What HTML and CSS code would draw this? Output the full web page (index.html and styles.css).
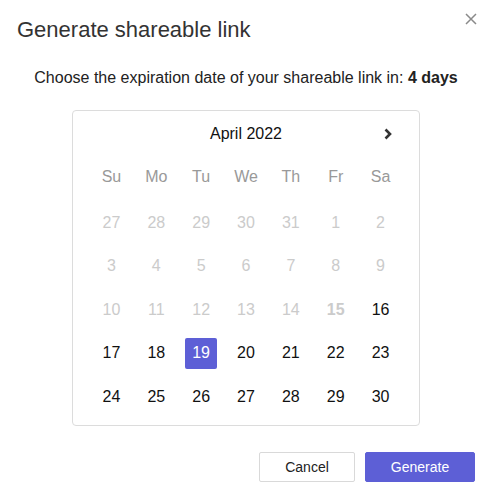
FILE: index.html
```html
<!DOCTYPE html>
<html>
<head>
<meta charset="utf-8">
<link rel="stylesheet" href="styles.css">
</head>
<body>
<div class="dialog">
  <div class="head">
    <h1 class="title">Generate shareable link</h1>
    <button class="close" aria-label="Close">
      <svg width="12" height="12" viewBox="0 0 12 12"><path d="M1 1L11 11M11 1L1 11" stroke="#8a8a8a" stroke-width="1.5" fill="none"/></svg>
    </button>
  </div>
  <p class="lead">Choose the expiration date of your shareable link in: <b>4 days</b></p>
  <div class="cal">
    <div class="cal-head">
      <span class="month">April 2022</span>
      <span class="next">
        <svg width="10" height="12" viewBox="0 0 10 12"><path d="M2.5 1.5L7 6L2.5 10.5" stroke="#333" stroke-width="2.6" fill="none"/></svg>
      </span>
    </div>
    <div class="weekdays">
      <span class="wd">Su</span><span class="wd">Mo</span><span class="wd">Tu</span><span class="wd">We</span><span class="wd">Th</span><span class="wd">Fr</span><span class="wd">Sa</span>
    </div>
    <div class="days">
      <span class="d off">27</span><span class="d off">28</span><span class="d off">29</span><span class="d off">30</span><span class="d off">31</span><span class="d off">1</span><span class="d off">2</span>
      <span class="d off">3</span><span class="d off">4</span><span class="d off">5</span><span class="d off">6</span><span class="d off">7</span><span class="d off">8</span><span class="d off">9</span>
      <span class="d off">10</span><span class="d off">11</span><span class="d off">12</span><span class="d off">13</span><span class="d off">14</span><span class="d off today">15</span><span class="d">16</span>
      <span class="d">17</span><span class="d">18</span><span class="d"><span class="sel">19</span></span><span class="d">20</span><span class="d">21</span><span class="d">22</span><span class="d">23</span>
      <span class="d">24</span><span class="d">25</span><span class="d">26</span><span class="d">27</span><span class="d">28</span><span class="d">29</span><span class="d">30</span>
    </div>
  </div>
  <div class="actions">
    <button class="btn cancel">Cancel</button>
    <button class="btn primary">Generate</button>
  </div>
</div>
</body>
</html>
```

FILE: styles.css
```css
* { box-sizing: border-box; }
html, body { margin: 0; padding: 0; background: #fff; }
body { font-family: "Liberation Sans", Arial, sans-serif; color: #222; }

.dialog { width: 490px; height: 494px; padding: 0 15px 0 17px; display: flex; flex-direction: column; }

.head { display: flex; justify-content: space-between; align-items: flex-start; height: 58px; }
.title { margin: 17px 0 0; font-size: 22px; font-weight: 400; color: #333; line-height: 26px; }
.close { border: 0; background: none; padding: 0; margin: 13px -2px 0 0; width: 12px; height: 12px; display: flex; }

.lead { margin: 2px 0 0; text-align: center; font-size: 16px; line-height: 36px; color: #222; }
.lead b { font-weight: 700; }

.cal { width: 348px; margin: 14px 0 0 55px; border: 1px solid #dcdcdc; border-radius: 4px; padding: 0 16px 6px; }
.cal-head { position: relative; height: 45px; display: flex; align-items: center; justify-content: center; }
.month { font-size: 16px; color: #111; }
.next { position: absolute; right: 10px; top: 17px; display: flex; }

.weekdays { display: grid; grid-template-columns: repeat(7, 1fr); height: 41px; }
.days { display: grid; grid-template-columns: repeat(7, 1fr); grid-template-rows: repeat(5, 43.5px); margin-top: 4px; }
.wd { display: flex; align-items: center; justify-content: center; font-size: 16px; color: #999; }
.d { display: flex; align-items: center; justify-content: center; font-size: 16px; color: #111; }
.d.off { color: #cbcbcb; }
.d.today { font-weight: 700; }
.sel { width: 32px; height: 31px; border-radius: 2px; background: #5d5fd6; color: #fff; display: flex; align-items: center; justify-content: center; }

.actions { display: flex; justify-content: flex-end; gap: 10px; margin-top: 26px; }
.btn { height: 30px; font-family: inherit; font-size: 14px; border-radius: 2px; padding: 0; }
.cancel { width: 96px; background: #fff; border: 1px solid #d9d9d9; color: #222; }
.primary { width: 110px; background: #5d5fd6; border: 1px solid #5d5fd6; color: #fff; }
```
